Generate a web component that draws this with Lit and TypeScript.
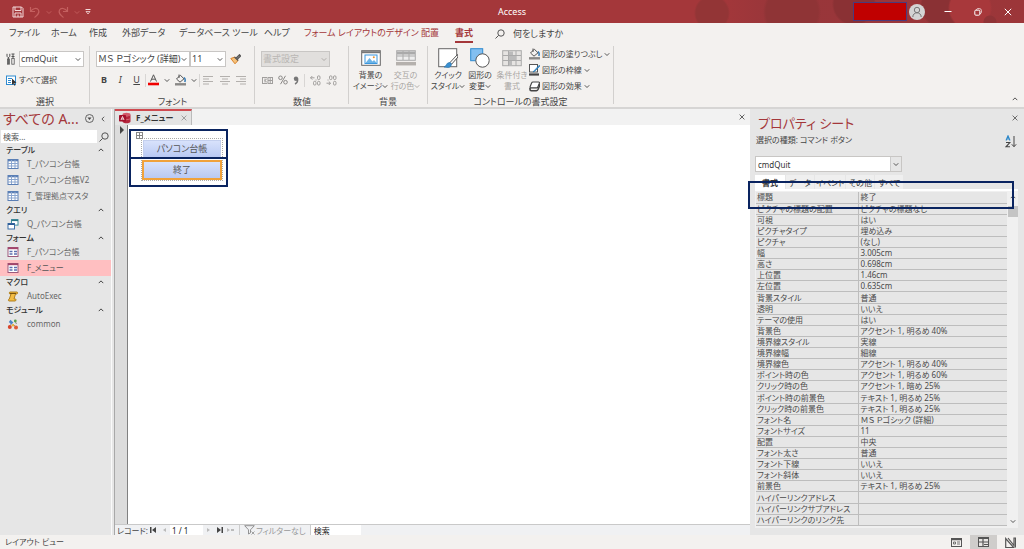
import { LitElement, html, css, svg, nothing, TemplateResult } from "lit";
import { customElement, property, state } from "lit/decorators.js";
import { classMap } from "lit/directives/class-map.js";

const chevron = (dir: "down" | "up" | "left" = "down") => {
  const d = { down: "M1 3l3 3 3-3", up: "M1 5.500l3-3 3 3", left: "M5.500 1l-3 3 3 3" }[dir];
  return html`<svg class="chev" viewBox="0 0 8 8" aria-hidden="true"><path d=${d} fill="none" stroke="currentColor" stroke-width="1.200" /></svg>`;
};

const icon = (w: number, h: number, body: unknown) =>
  html`<svg width=${w} height=${h} viewBox="0 0 ${w} ${h}" fill="none" aria-hidden="true">${body}</svg>`;

const icons: Record<string, TemplateResult> = {
  save: icon(12, 12, svg`<path d="M1 1h8.500L11 2.500V11H1z" stroke="#f3dada"/><path d="M3 1v3.500h6V1M3 11V7h6v4M6 8.500V11" stroke="#f3dada"/>`),
  undo: icon(12, 12, svg`<path d="M1.500 1v4.500H6M1.500 5.500C4 2 8 1.500 9.500 4c1.500 3-1 5-4 7.500" stroke="#c4605f" stroke-width="1.200"/>`),
  redo: icon(12, 12, svg`<path d="M10.500 1v4.500H6M10.500 5.500C8 2 4 1.500 2.500 4c-1.500 3 1 5 4 7.500" stroke="#c4605f" stroke-width="1.200"/>`),
  custom: icon(6, 6, svg`<path d="M.5.5h5" stroke="#f3dada"/><path d="M1 2.500h4L3 5z" stroke="#f3dada" stroke-width=".8"/>`),
  user: icon(16, 16, svg`<circle cx="8" cy="8" r="8" fill="#d4d4d4"/><circle cx="8" cy="6" r="2.700" stroke="#777"/><path d="M3.800 13c0-5.600 8.400-5.600 8.400 0" stroke="#777"/>`),
  min: icon(8, 8, svg`<path d="M.5 3.500h7" stroke="#fff"/>`),
  restore: icon(8, 8, svg`<rect x=".8" y="2.200" width="5" height="5" rx="1" stroke="#fff"/><path d="M2.500 1.900C2.600 1 3 .7 3.800.7H5.500c1.200 0 1.800.7 1.800 1.800v1.800c0 .8-.4 1.200-1.200 1.300" stroke="#fff" stroke-width=".8"/>`),
  close: icon(8, 8, svg`<path d="M.8.8l6.400 6.400M7.200.8L.8 7.200" stroke="currentColor"/>`),
  search: icon(10, 10, svg`<circle cx="6" cy="4" r="3.200" stroke="#555"/><path d="M3.600 6.400L.5 9.500" stroke="#555"/>`),
  tools: icon(9, 12, svg`<path d="M1 .8v2.500l1 1.200h.8l1-1.200V.8M2.400 4.500V11M5.500 1h3M5.500 3.500h3M7 1v4" stroke="#555"/><rect x="1.500" y="6" width="2" height="5.200" stroke="#555" stroke-width=".8"/><rect x="5.800" y="5.500" width="2.400" height="5.700" stroke="#555" stroke-width=".8"/>`),
  selectAll: icon(11, 11, svg`<rect x=".5" y="1" width="9" height="8.500" fill="#fff" stroke="#2f8bd0"/><path d="M2 3.500h4M2 5.500h3M2 7.500h3" stroke="#2f8bd0"/><path d="M6 3.500l4.500 4.300-2.200.2 1.100 2.300-1 .5-1.100-2.300L6 10z" fill="#333"/>`),
  painter: icon(11, 11, svg`<path d="M.8 4.500L5 9.800l3-3.300-3.500-3.300z" fill="#f6c27a" stroke="#d9822b"/><path d="M4.500 3l3.700 3.500M6 4.300l3.500-3.500 1 1.200-3.300 3.300" stroke="#555" stroke-width="1.300"/>`),
  fontColor: icon(11, 12, svg`<path d="M2.500 7.500L5.500 .8l3 6.700M3.600 5.200h3.800" stroke="#555"/><path d="M0 10h11" stroke="#f00000" stroke-width="2.600"/>`),
  fill: icon(11, 12, svg`<path d="M1.500 5L5.300 1.200 9 4.800 5 8.200zM4 .5v3.500" stroke="#555"/><path d="M9 3.500c1.300 1 1.300 3 .8 4.500" stroke="#2f78b5" stroke-width="1.500"/><path d="M0 10.300h11" stroke="#8a8886" stroke-width="2.400"/>`),
  left: icon(10, 9, svg`<path d="M0 .5h10M0 3h6M0 5.500h10M0 8h6" stroke="#b3b0ad"/>`),
  center: icon(10, 9, svg`<path d="M0 .5h10M2 3h6M0 5.500h10M2 8h6" stroke="#b3b0ad"/>`),
  right: icon(10, 9, svg`<path d="M0 .5h10M4 3h6M0 5.500h10M4 8h6" stroke="#b3b0ad"/>`),
  currency: icon(11, 9, svg`<path d="M0 1.500h5M.5 1v7M0 7.500h5M3 2.500v4M3 4.500l2-2M3 4.500l2 2" stroke="#a19f9d"/><rect x="6" y="1.500" width="4.500" height="6" stroke="#a19f9d"/><path d="M6 4.500h4.500M8.200 1.500v6" stroke="#a19f9d"/>`),
  percent: icon(10, 10, svg`<circle cx="2.500" cy="2.800" r="1.800" stroke="#8a8886"/><circle cx="7.500" cy="7.200" r="1.800" stroke="#8a8886"/><path d="M7.500.8l-5 8.400" stroke="#8a8886"/>`),
  comma: icon(6, 9, svg`<circle cx="3" cy="2.800" r="2.200" fill="#777"/><path d="M4.500 2.500c.5 2.500-.5 4.500-2.500 5.500" stroke="#777" stroke-width="1.400"/>`),
  decInc: icon(11, 11, svg`<path d="M.5 2.800h4M2.300 1L.5 2.800l1.800 1.800M6 4.500v1" stroke="#a19f9d"/><rect x="7.500" y=".8" width="2.500" height="3.800" rx="1.200" stroke="#a19f9d"/><rect x="3.500" y="6.300" width="2.500" height="3.800" rx="1.200" stroke="#a19f9d"/><rect x="7.500" y="6.300" width="2.500" height="3.800" rx="1.200" stroke="#a19f9d"/>`),
  decDec: icon(11, 11, svg`<path d="M.5 8.200h4M2.800 6.500l1.700 1.700-1.700 1.800M2 4.500v1" stroke="#a19f9d"/><rect x="3.500" y=".8" width="2.500" height="3.800" rx="1.200" stroke="#a19f9d"/><rect x="7.500" y=".8" width="2.500" height="3.800" rx="1.200" stroke="#a19f9d"/><rect x="7.500" y="6.300" width="2.500" height="3.800" rx="1.200" stroke="#a19f9d"/>`),
  bgImage: icon(20, 20, svg`<rect x=".7" y="2.700" width="18.600" height="14.600" fill="#fff" stroke="#666"/><path d="M1 4.200h18" stroke="#777" stroke-width="2"/><rect x="4" y="7" width="12" height="8.500" fill="#fff" stroke="#3a96dd"/><path d="M4.500 15l4-5 3 3.500 1.500-1.500 2.800 3z" fill="#6bb3e6"/><circle cx="12.800" cy="9.300" r="1" fill="#e8912d"/>`),
  altRow: icon(20, 20, svg`<rect x=".7" y="2.700" width="18.600" height="9.600" fill="#eee" stroke="#aaa"/><path d="M1 5h18" stroke="#aaa" stroke-width="3"/><path d="M1 8h18M7 3v9M13 3v9" stroke="#aaa"/><path d="M0 15.700h20" stroke="#b5b1ad" stroke-width="3.500"/>`),
  quick: icon(20, 20, svg`<rect x=".7" y=".7" width="18" height="18" fill="#fff" stroke="#666"/><path d="M19.500 6.500L12 14.500l1.500 1.800L20 9z" fill="#fff" stroke="#555"/><path d="M6 19c2.500-.3 2-4.500 5.500-4.500 2.800 0 2.500 5-1.500 5z" fill="#3a8fd0" stroke="#2470a8" stroke-width=".6"/>`),
  shape: icon(20, 20, svg`<rect x=".7" y=".7" width="12" height="12" fill="#83bff0" stroke="#2f8bd0"/><circle cx="12.500" cy="12.500" r="6.700" fill="#fff" stroke="#555"/>`),
  cond: icon(20, 20, svg`<rect x=".7" y="2.700" width="18.600" height="15" fill="#e6e4e2" stroke="#aaa"/><path d="M1 7.500h18M1 12.500h18M6.500 3v15M14 3v15" stroke="#aaa"/><path d="M7 3.500h4v3.500H7zM7 8h7v4H7zM7 13h3v4.500H7z" fill="#bbb"/>`),
  outline: icon(11, 12, svg`<rect x=".5" y=".5" width="8" height="7.500" fill="#fff" stroke="#555"/><path d="M10.300 1.200L5 6.800 4 8l1.600-.6L11 2z" fill="#3a96dd" stroke="#2470a8" stroke-width=".6"/><path d="M0 10.500h10" stroke="#444" stroke-width="2.200"/>`),
  effect: icon(11, 11, svg`<path d="M4 1h5.500c.8 0 1.200.5.900 1.200L8.800 6c-.2.600-.7.900-1.400.9H2c-.8 0-1.100-.5-.9-1.100L2.600 2C2.900 1.300 3.300 1 4 1z" fill="#fff" stroke="#444" stroke-width="1.100"/><path d="M1 7v1.300c0 .9.500 1.400 1.300 1.400h5c.8 0 1.300-.4 1.700-1.200l1.500-3.500V3" stroke="#444" stroke-width="1.600"/>`),
  circleDown: icon(9, 9, svg`<circle cx="4.500" cy="4.500" r="4" stroke="#555" stroke-width=".9"/><path d="M2.500 3.500h4l-2 2.500z" fill="#444"/>`),
  table: icon(11, 10, svg`<rect x=".5" y=".5" width="10" height="9" fill="#fff" stroke="#5b7fb5"/><path d="M.5 1.500h10" stroke="#5b7fb5" stroke-width="1.600"/><path d="M.5 4.500h10M.5 7h10M4 1v8M7.500 1v8" stroke="#8ba6cf"/>`),
  query: icon(12, 11, svg`<rect x="4.500" y=".6" width="6.500" height="5.500" fill="#fff" stroke="#3f8f9f"/><path d="M4.500 1.300H11" stroke="#2c7688" stroke-width="1.600"/><rect x="1" y="4.500" width="6.500" height="5.500" fill="#fff" stroke="#3b6fa8"/><path d="M1 5.200h6.500" stroke="#2c5a94" stroke-width="1.600"/>`),
  form: icon(11, 10, svg`<rect x=".5" y=".5" width="10" height="9" fill="#fff" stroke="#9c5a7c"/><path d="M.5 1.300h10" stroke="#a4446a" stroke-width="1.800"/><path d="M2 4.500h3M2 7h3M6.500 4.500h3M6.500 7h3" stroke="#5b6fae" stroke-width="1.300"/>`),
  macro: icon(11, 11, svg`<path d="M2.500 1h7c.8 0 .8 2-.3 2H8l-1.500 5H8c.8 0 .6 2-.4 2H1.500C.6 10 .8 8 1.800 8L3.500 3h-1c-1 0-1-2 0-2z" fill="#f3bd45" stroke="#a87612" stroke-width=".9"/><path d="M2.500 2.500h6" stroke="#7a5510"/>`),
  module: icon(12, 11, svg`<path d="M3 6.500L6 3M6 5l3 3M8 2l1.500 3" stroke="#8a8a8a"/><circle cx="2.800" cy="8" r="2" fill="#d8452b"/><circle cx="9" cy="8.500" r="2" fill="#dc5a36"/><path d="M3.500.8l2.800 2.700-2 2L1.800 3z" fill="#4c86c9"/><circle cx="8.300" cy="2" r="1.400" fill="#5aa04a"/><circle cx="6" cy="6.300" r="1.200" fill="#e9b33a"/>`),
  access: icon(12, 12, svg`<ellipse cx="7.500" cy="2.500" rx="4" ry="1.800" fill="#d4596a"/><path d="M3.500 2.500v7c0 2.400 8 2.400 8 0v-7c0 2.400-8 2.400-8 0z" fill="#b3263c"/><path d="M3.500 6.500c1 1.500 7 1.500 8 0" stroke="#e07b88" stroke-width=".7"/><rect x="0" y="3" width="7" height="6.500" rx=".8" fill="#a4112b"/><path d="M2 8l1.500-3.500L5 8M2.600 7h1.900" stroke="#fff" stroke-width=".8"/>`),
  move: icon(7, 7, svg`<rect x=".5" y=".5" width="6" height="6" fill="#fff" stroke="#888"/><path d="M3.500 1v5M1 3.500h5" stroke="#777" stroke-width=".9"/>`),
  filter: icon(11, 10, svg`<path d="M.7.700h9.600L6.500 4.800v3L4.500 9V4.800z" stroke="#888" stroke-width=".9"/><path d="M7.500 6.500l3 3M10.500 6.500l-3 3" stroke="#999" stroke-width=".9"/>`),
  sort: icon(12, 13, svg`<path d="M1 5.500L3 .800l2 4.700M1.700 4h2.600" stroke="#2a86c8" stroke-width="1.100"/><path d="M1 7.500h3.800L1 11.800h4" stroke="#444" stroke-width="1.100"/><path d="M9 1v10.500M6.800 9.300L9 11.700l2.200-2.400" stroke="#444"/>`),
  formView: icon(11, 9, svg`<rect x=".5" y=".5" width="10" height="8" stroke="#555"/><path d="M.5 1.500h10" stroke="#555" stroke-width="1.500"/><path d="M2.500 4h2v2h-2zM6 4h3M6 6h3" stroke="#666" stroke-width=".9"/>`),
  layoutView: icon(11, 10, svg`<rect x=".5" y=".5" width="10" height="9" fill="#e8e6e4" stroke="#555"/><path d="M.5 1.500h10M5 2v8M.5 5h10M6 7.500h4" stroke="#555" stroke-width="1.200"/>`),
  designView: icon(11, 11, svg`<path d="M.7 1.500v9h8z" stroke="#555" stroke-width="1.200"/><path d="M3 1l6 7.500V1h1.500v9.500" stroke="#555" stroke-width="1.200"/>`),
};

const nav = [
  { name: "テーブル", icon: "table", items: ["T_パソコン台帳", "T_パソコン台帳V2", "T_管理拠点マスタ"] },
  { name: "クエリ", icon: "query", items: ["Q_パソコン台帳"] },
  { name: "フォーム", icon: "form", items: ["F_パソコン台帳", "F_メニュー"] },
  { name: "マクロ", icon: "macro", items: ["AutoExec"] },
  { name: "モジュール", icon: "module", items: ["common"] },
];

const props: [string, string][] = [
  ["標題", "終了"],
  ["ピクチャの標題の配置", "ピクチャの標題なし"],
  ["可視", "はい"],
  ["ピクチャタイプ", "埋め込み"],
  ["ピクチャ", "(なし)"],
  ["幅", "3.005cm"],
  ["高さ", "0.698cm"],
  ["上位置", "1.46cm"],
  ["左位置", "0.635cm"],
  ["背景スタイル", "普通"],
  ["透明", "いいえ"],
  ["テーマの使用", "はい"],
  ["背景色", "アクセント 1, 明るめ 40%"],
  ["境界線スタイル", "実線"],
  ["境界線幅", "細線"],
  ["境界線色", "アクセント 1, 明るめ 40%"],
  ["ポイント時の色", "アクセント 1, 明るめ 60%"],
  ["クリック時の色", "アクセント 1, 暗め 25%"],
  ["ポイント時の前景色", "テキスト 1, 明るめ 25%"],
  ["クリック時の前景色", "テキスト 1, 明るめ 25%"],
  ["フォント名", "ＭＳ Ｐゴシック (詳細)"],
  ["フォントサイズ", "11"],
  ["配置", "中央"],
  ["フォント太さ", "普通"],
  ["フォント下線", "いいえ"],
  ["フォント斜体", "いいえ"],
  ["前景色", "テキスト 1, 明るめ 25%"],
  ["ハイパーリンクアドレス", ""],
  ["ハイパーリンクサブアドレス", ""],
  ["ハイパーリンクのリンク先", ""],
];

const base = css`
  * { box-sizing: border-box; }
  :host {
    font-family: "Noto Sans", "Noto Sans CJK JP", sans-serif;
    font-feature-settings: "palt";
    white-space: nowrap;
    color: #444;
  }
  button, input, select {
    font: inherit; font-feature-settings: inherit; color: inherit;
    margin: 0; padding: 0; border: 0; background: none; border-radius: 0;
    min-width: 0; outline: none;
  }
  button { display: flex; align-items: center; justify-content: center; }
  svg { display: block; flex: none; }
  .chev { width: 6px; height: 6px; }
  .combo { display: grid; grid-template-columns: minmax(0, 1fr) 11px; background: #fff; border: 1px solid #c8c6c4; align-items: center; }
  .combo select { grid-area: 1 / 1 / 2 / 3; appearance: none; width: 100%; height: 100%; padding-left: 1px; }
  .combo .chev { grid-area: 1 / 2; justify-self: center; pointer-events: none; }
  .off { color: #a9a6a3; }
`;

@customElement("access-ribbon")
class AccessRibbon extends LitElement {
  static styles = [base, css`
    :host { display: block; background: #f3f1ef; border-bottom: 2px solid #d6d5d4; font-size: 9px; line-height: 12px; }
    .title { display: grid; grid-template-columns: 1fr auto 1fr; align-items: center; height: 23px; color: #fff;
      background:
        radial-gradient(circle at calc(100% - 312px) 13px, #933536 0 16px, transparent 18px),
        radial-gradient(circle at calc(100% - 232px) 12px, #8f3436 0 26px, transparent 29px),
        radial-gradient(circle at calc(100% - 34px) 22px, #8f3336 0 6px, transparent 7px),
        radial-gradient(circle at calc(100% - 54px) 8px, #a8383b 0 20px, transparent 22px),
        radial-gradient(circle at calc(100% - 82px) 6px, #8a3134 0 20px, transparent 22px),
        radial-gradient(circle at calc(100% - 170px) 4px, #8a3134 0 20px, transparent 22px),
        linear-gradient(90deg, #a4373a 70%, #98363a 76%, #9c3639 100%); }
    .quick { display: flex; align-items: center; gap: 5px; padding-left: 12px; }
    .quick button:nth-child(3), .quick button:nth-child(5) { color: #c4605f; }
    .window { display: flex; align-items: center; justify-content: flex-end; padding-right: 12px; }
    .account { width: 54px; height: 19px; background: #c00000; border: 1px solid #4a3a7c; margin-right: 2px; }
    .window button { width: 8px; margin-left: 22px; }
    .window .user { width: 16px; margin: 0; }
    .window .user + button { margin-left: 19px; }
    .tabs { display: flex; height: 22px; margin-bottom: 1px; align-items: center; padding-left: 9px; }
    .tabs button { justify-content: flex-start; height: 18px; border-bottom: 2px solid transparent; }
    .tabs .ctx { color: #a4373a; }
    .tabs .on { font-weight: 700; border-color: #a4373a; }
    .ask { display: flex; align-items: center; gap: 8px; margin-left: 22px; }
    .ask input { width: 80px; }
    .ask input::placeholder { color: #444; opacity: 1; }
    .groups { display: flex; height: 58px; margin-bottom: 3px; align-items: stretch; }
    .group { flex: none; display: flex; flex-direction: column; border-right: 1px solid #d2d0ce; padding: 5px 5px 0 6px; }
    .body { flex: 1; display: flex; flex-direction: column; gap: 6px; }
    .label { text-align: center; height: 10px; line-height: 10px; margin-bottom: -3px; }
    .row { display: flex; align-items: center; height: 16px; }
    .row.tight { height: 14px; }
    .w-select { width: 90px; }
    .w-font { width: 165px; }
    .w-number { width: 94px; }
    .w-back { width: 79px; padding: 2px 4px 0 4px; }
    .w-control { width: 186px; padding: 2px 4px 0 4px; }
    .row .combo { height: 16px; }
    .c-object { width: 65px; margin-left: 4px; }
    .c-font { width: 94px; }
    .c-size { width: 36px; }
    .c-format { width: 69px; background: #e1dfdd; color: #a9a6a3; }
    .tools { gap: 2px; font-size: 8px; }
    .painter { margin-left: 4px; }
    .font-tools button { width: 26px; gap: 5px; }
    .font-tools .style { width: 16px; }
    .font-tools .style:nth-child(2) { font-style: italic; }
    .font-tools .style:nth-child(3) { text-decoration: underline; }
    .bold { font-weight: 700; }
    .font-tools { justify-content: space-between; }
    .sep { width: 1px; height: 13px; background: #d8d6d4; }
    .number-tools { justify-content: space-between; padding: 0 6px 0 1px; }
    .bigs { flex: 1; display: flex; }
    .big { flex: none; flex-direction: column; justify-content: flex-start; line-height: 11px; font-size: 8px; width: 32px; }
    .w-back .big { width: 35px; }
    .big svg { margin-bottom: 1px; }
    .big .line { display: flex; align-items: center; }
    .big .chev { margin: 0; }
    .side { display: flex; flex-direction: column; gap: 4px; margin-left: 1px; }
    .side button { height: 12px; gap: 2px; justify-content: flex-start; font-size: 8px; }
    .collapse { margin: auto 6px 0 auto; height: 10px; }
  `];

  @state() active = "書式";

  private tabs: [string, number][] = [
    ["ファイル", 42], ["ホーム", 38], ["作成", 33], ["外部データ", 57], ["データベース ツール", 85],
    ["ヘルプ", 40], ["フォーム レイアウトのデザイン", 117], ["配置", 34], ["書式", 18],
  ];

  private big(name: string, a: string, b: string, menu = true, off = false) {
    return html`<button class=${classMap({ big: true, off })}>
      ${icons[name]}<span>${a}</span><span class="line">${b}${menu ? chevron() : nothing}</span>
    </button>`;
  }

  render() {
    return html`
      <header class="title">
        <div class="quick">
          <button aria-label="上書き保存">${icons.save}</button>
          <button aria-label="元に戻す">${icons.undo}</button><button aria-label="元に戻す一覧">${chevron()}</button>
          <button aria-label="やり直し">${icons.redo}</button><button aria-label="やり直し一覧">${chevron()}</button>
          <button aria-label="クイック アクセス">${icons.custom}</button>
        </div>
        <span>Access</span>
        <div class="window">
          <span class="account"></span>
          <button class="user" aria-label="アカウント">${icons.user}</button>
          <button aria-label="最小化">${icons.min}</button>
          <button aria-label="元のサイズ">${icons.restore}</button>
          <button aria-label="閉じる">${icons.close}</button>
        </div>
      </header>
      <nav class="tabs">
        ${this.tabs.map(([t, w], i) => html`<span style="width:${w}px"><button
          class=${classMap({ ctx: i > 5, on: t === this.active })} @click=${() => (this.active = t)}>${t}</button></span>`)}
        <label class="ask">${icons.search}<input aria-label="操作アシスト" placeholder="何をしますか" /></label>
      </nav>
      <div class="groups">
        <section class="group w-select">
          <div class="body">
            <div class="row">${icons.tools}<span class="combo c-object"><select aria-label="オブジェクト"><option>cmdQuit</option></select>${chevron()}</span></div>
            <div class="row tight"><button class="tools">${icons.selectAll}すべて選択</button></div>
          </div>
          <div class="label">選択</div>
        </section>
        <section class="group w-font">
          <div class="body">
            <div class="row">
              <span class="combo c-font"><select aria-label="フォント"><option>ＭＳ Ｐゴシック (詳細)</option></select>${chevron()}</span>
              <span class="combo c-size"><select aria-label="フォント サイズ"><option>11</option></select>${chevron()}</span>
              <button class="painter" aria-label="書式のコピー">${icons.painter}</button>
            </div>
            <div class="row tight font-tools">
              <button class="style bold">B</button><button class="style">I</button><button class="style">U</button>
              <span class="sep"></span>
              <button aria-label="フォントの色">${icons.fontColor}${chevron()}</button>
              <button aria-label="背景色">${icons.fill}${chevron()}</button>
              <span class="sep"></span>
              <button class="style" aria-label="左揃え">${icons.left}</button>
              <button class="style" aria-label="中央揃え">${icons.center}</button>
              <button class="style" aria-label="右揃え">${icons.right}</button>
            </div>
          </div>
          <div class="label">フォント</div>
        </section>
        <section class="group w-number">
          <div class="body">
            <div class="row"><span class="combo c-format"><select aria-label="表示形式" disabled><option>書式設定</option></select>${chevron()}</span></div>
            <div class="row tight number-tools">
              <button aria-label="通貨">${icons.currency}</button><button aria-label="パーセント">${icons.percent}</button>
              <button aria-label="桁区切り">${icons.comma}</button><span class="sep"></span>
              <button aria-label="小数点以下を増やす">${icons.decInc}</button><button aria-label="小数点以下を減らす">${icons.decDec}</button>
            </div>
          </div>
          <div class="label">数値</div>
        </section>
        <section class="group w-back">
          <div class="bigs">${this.big("bgImage", "背景の", "イメージ")}${this.big("altRow", "交互の", "行の色", true, true)}</div>
          <div class="label">背景</div>
        </section>
        <section class="group w-control">
          <div class="bigs">
            ${this.big("quick", "クイック", "スタイル")}${this.big("shape", "図形の", "変更")}${this.big("cond", "条件付き", "書式", false, true)}
            <div class="side">
              <button>${icons.fill}図形の塗りつぶし${chevron()}</button>
              <button>${icons.outline}図形の枠線${chevron()}</button>
              <button>${icons.effect}図形の効果${chevron()}</button>
            </div>
          </div>
          <div class="label">コントロールの書式設定</div>
        </section>
        <button class="collapse" aria-label="リボンを折りたたむ">${chevron("up")}</button>
      </div>`;
  }
}

@customElement("access-nav")
class AccessNav extends LitElement {
  static styles = [base, css`
    :host { display: block; background: #e6e6e6; border-right: 1px solid #fafafa; font-size: 8px; line-height: 12px; }
    .head { display: flex; align-items: center; height: 19px; padding: 0 5px 0 3px; gap: 6px; }
    h1 { flex: 1; margin: 0; font-size: 14px; font-weight: 400; color: #a4373a; line-height: 19px; }
    .find { display: flex; align-items: center; height: 13px; margin: 2px 1px 1px; background: #fff; }
    .find input { flex: 1; padding-left: 2px; }
    .find input::placeholder { color: #555; opacity: 1; }
    .find button { width: 13px; height: 13px; background: #e6e6e6; }
    .group { display: flex; justify-content: space-between; width: 100%; height: 12px; padding: 0 7px 0 6px; font-weight: 500; color: #333; }
    .item { display: flex; justify-content: flex-start; gap: 8px; width: 100%; height: 16px; padding-left: 7px; color: #666; }
    .item svg { width: 12px; }
    .item.on { background: #ffbfc1; color: #555; }
  `];

  @state() selected = "F_メニュー";

  render() {
    return html`
      <div class="head"><h1>すべての A...</h1>${icons.circleDown}<button aria-label="閉じる">${chevron("left")}</button></div>
      <div class="find"><input aria-label="検索" placeholder="検索..." /><button aria-label="検索">${icons.search}</button></div>
      ${nav.map((g) => html`
        <button class="group"><span>${g.name}</span>${chevron("up")}</button>
        ${g.items.map((t) => html`<button class=${classMap({ item: true, on: t === this.selected })}
          @click=${() => (this.selected = t)}>${icons[g.icon]}${t}</button>`)}`)}`;
  }
}

@customElement("access-document")
class AccessDocument extends LitElement {
  static styles = [base, css`
    :host { display: flex; flex-direction: column; min-width: 0; border-left: 1px solid #a8a8a8; font-size: 8px; line-height: 12px; background: #f2f2f2; }
    .tabs { display: flex; justify-content: space-between; align-items: center; height: 16px; padding-right: 5px; color: #333; }
    .tab { display: flex; align-items: center; gap: 5px; width: 77px; height: 16px; padding: 0 4px; background: #e4e4e4; border-top: 2px solid #cf4a50; border-right: 1px solid #bbb; }
    .tab span { flex: 1; font-weight: 700; }
    .tab button { color: #888; }
    .tabs > button svg, .tab button svg { width: 6px; height: 6px; }
    .view { flex: 1; display: flex; min-height: 0; }
    .selector { width: 13px; background: #dcdcdc; border-right: 1px solid #808080; padding: 1px 4px; }
    .canvas { position: relative; flex: 1; background: #fff; }
    .layout { position: absolute; left: 13px; top: 13px; width: 82px; height: 43px; border: 1px dotted #aaa; padding: 1px; display: flex; flex-direction: column; gap: 3px; }
    .layout button { height: 18px; font-size: 9px; color: #555; background: linear-gradient(#d8e2fb, #b9c9f3); border: 1px solid #c3cfee; }
    .layout .current { border: 1px solid #f0a23c; outline: 1px solid #f0a23c; height: 19px; }
    .handle { position: absolute; left: 8px; top: 7px; }
    .mark { position: absolute; left: 1px; width: 99px; height: 30px; border: 2px solid #0a2460; }
    .mark.first { top: 4px; }
    .mark.second { top: 32px; }
    .records { display: flex; align-items: center; height: 11px; line-height: 11px; border-top: 1px solid #c9c9c9; background: #f0f1f3; padding-left: 2px; color: #444; }
    .records input { background: #fff; color: #222; height: 10px; }
    .page { width: 33px; padding-left: 2px; }
    .records button { width: 11px; }
    .dim { color: #bbb; }
    .filter { display: flex; align-items: center; gap: 1px; border: 1px solid #ccc; border-width: 0 1px; height: 100%; padding: 0 4px; margin-left: 3px; color: #999; }
    .search { width: 50px; padding-left: 3px; }
    .search::placeholder { color: #222; opacity: 1; }
  `];

  private arrow(d: string) {
    return icon(7, 6, svg`<path d=${d} fill="currentColor"/>`);
  }

  render() {
    return html`
      <div class="tabs">
        <div class="tab">${icons.access}<span>F_メニュー</span><button aria-label="タブを閉じる">${icons.close}</button></div>
        <button aria-label="閉じる">${icons.close}</button>
      </div>
      <div class="view">
        <div class="selector">${icon(5, 8, svg`<path d="M1 0l4 4-4 4z" fill="#444"/>`)}</div>
        <div class="canvas">
          <div class="layout"><button>パソコン台帳</button><button class="current">終了</button></div>
          <span class="handle">${icons.move}</span>
          <span class="mark first"></span><span class="mark second"></span>
        </div>
      </div>
      <div class="records">
        <label for="page">レコード:</label>
        <button aria-label="先頭">${this.arrow("M0 0h1.500v6H0zM6 0v6L2 3z")}</button>
        <button class="dim" aria-label="前へ">${this.arrow("M5 1v4L2 3z")}</button>
        <input id="page" class="page" value="1 / 1" />
        <button class="dim" aria-label="次へ">${this.arrow("M2 1v4l3-2z")}</button>
        <button aria-label="最後">${this.arrow("M1 0v6l4-3zM5.500 0H7v6H5.500z")}</button>
        <button class="dim" aria-label="新規">${this.arrow("M0 1v4l3-2zM4 2h3v2H4z")}</button>
        <span class="filter">${icons.filter}フィルターなし</span>
        <input class="search" aria-label="検索" placeholder="検索" />
      </div>`;
  }
}

@customElement("property-sheet")
class PropertySheet extends LitElement {
  static styles = [base, css`
    :host { position: relative; display: flex; flex-direction: column; background: #e6e6e6; padding: 6px 6px 7px 5px; font-size: 8px; line-height: 11px; }
    .head { display: flex; justify-content: space-between; align-items: flex-start; }
    h2 { margin: 0 0 0 3px; font-size: 13px; line-height: 17px; font-weight: 400; color: #a4373a; }
    .kind { display: flex; justify-content: space-between; height: 23px; padding: 2px 1px 0 1px; }
    .head button svg { width: 6px; height: 6px; }
    .kind button { align-items: flex-start; margin-top: 1px; }
    .combo { width: 147px; height: 16px; margin-top: 1px; flex: none; }
    .combo select { padding-left: 2px; color: #333; }
    .combo .chev { width: 11px; height: 14px; padding: 3px 2px; background: #e6e6e6; border-left: 1px solid #ccc; justify-self: end; }
    .tabs { display: flex; gap: 1px; height: 14px; margin-top: 3px; flex: none; }
    .tabs button { min-width: 28px; padding: 0 1px; background: #efefef; color: #333; }
    .tabs .on { background: #fff; font-weight: 700; min-width: 30px; }
    .frame { flex: 1; min-height: 0; display: grid; grid-template-columns: minmax(0, 1fr) 11px; background: #f0f0f0; border-top: 2px solid #fff; padding: 1px 0 2px 1px; }
    table { width: 100%; height: 100%; border-collapse: collapse; background: #e6e6e6; table-layout: fixed; color: #4a4a4a; }
    th, td { padding: 0 0 0 1px; border: solid #bdbdbd; border-width: 0 0 1px 0; text-align: left; font-weight: 400; line-height: 10px; height: 11px; }
    th { width: 41%; border-right-width: 1px; }
    .bar { display: flex; flex-direction: column; justify-content: space-between; align-items: center; padding: 2px 0; }
    .thumb { width: 10px; height: 11px; background: #c4c4c4; margin: 6px 0 auto; }
    .mark { position: absolute; left: -2px; right: 10px; top: 72px; height: 28px; border: 2px solid #0a2460; }
  `];

  @property() tab = "書式";

  render() {
    return html`
      <div class="head"><h2>プロパティ シート</h2><button aria-label="閉じる">${icons.close}</button></div>
      <div class="kind"><span>選択の種類: コマンド ボタン</span><button aria-label="並べ替え">${icons.sort}</button></div>
      <span class="combo"><select aria-label="選択の種類"><option>cmdQuit</option></select>${chevron()}</span>
      <div class="tabs">
        ${["書式", "データ", "イベント", "その他", "すべて"].map((t) => html`<button
          class=${classMap({ on: t === this.tab })} @click=${() => (this.tab = t)}>${t}</button>`)}
      </div>
      <div class="frame">
        <table><tbody>${props.map(([k, v]) => html`<tr><th scope="row">${k}</th><td>${v}</td></tr>`)}</tbody></table>
        <div class="bar">${chevron("up")}<span class="thumb"></span>${chevron()}</div>
      </div>
      <span class="mark"></span>`;
  }
}

@customElement("app-root")
class AppRoot extends LitElement {
  static styles = [base, css`
    :host { display: flex; flex-direction: column; height: 100vh; overflow: hidden; background: #e6e6e6; }
    main { flex: 1; min-height: 0; display: grid; grid-template-columns: 112px minmax(0, 1fr) 274px; column-gap: 0; }
    access-document { margin-left: 2px; }
    footer { display: flex; justify-content: space-between; align-items: center; height: 14px; flex: none; background: #f3f1ef; padding: 0 0 0 5px; font-size: 8px; line-height: 12px; }
    .views { display: flex; height: 100%; }
    .views button { width: 27px; height: 100%; }
    .views .on { background: #cfcdcb; }
  `];

  render() {
    return html`
      <access-ribbon></access-ribbon>
      <main>
        <access-nav></access-nav>
        <access-document></access-document>
        <property-sheet></property-sheet>
      </main>
      <footer>
        <span>レイアウト ビュー</span>
        <div class="views">
          <button aria-label="フォーム ビュー">${icons.formView}</button>
          <button class="on" aria-label="レイアウト ビュー">${icons.layoutView}</button>
          <button aria-label="デザイン ビュー">${icons.designView}</button>
        </div>
      </footer>`;
  }
}
